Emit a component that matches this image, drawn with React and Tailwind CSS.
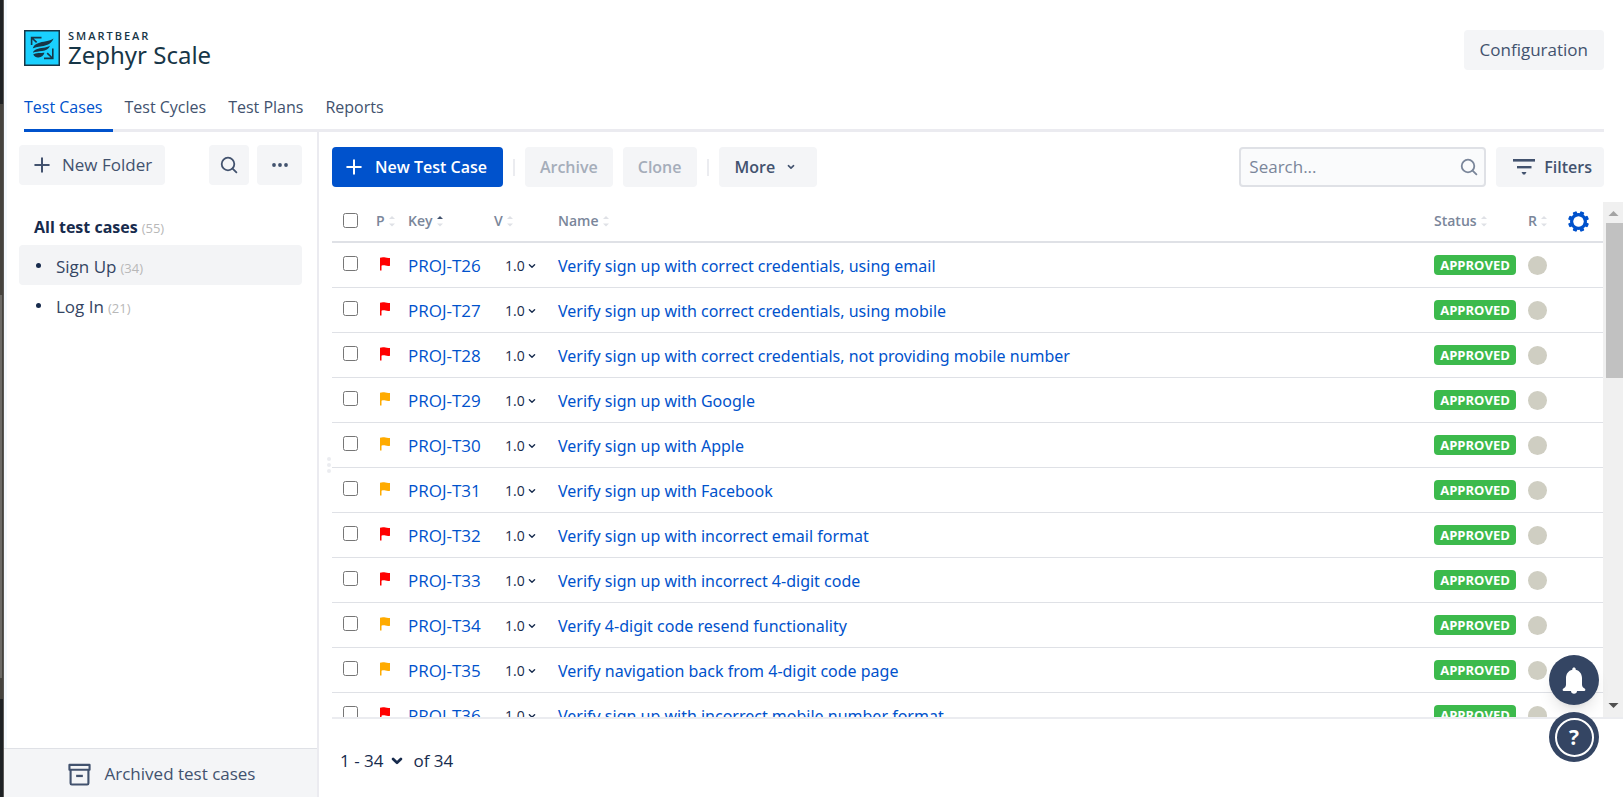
import React from "react";

const RED = "#ff0000";
const AMBER = "#ffab00";

const testCases = [
  { key: "PROJ-T26", name: "Verify sign up with correct credentials, using email", flag: RED },
  { key: "PROJ-T27", name: "Verify sign up with correct credentials, using mobile", flag: RED },
  { key: "PROJ-T28", name: "Verify sign up with correct credentials, not providing mobile number", flag: RED },
  { key: "PROJ-T29", name: "Verify sign up with Google", flag: AMBER },
  { key: "PROJ-T30", name: "Verify sign up with Apple", flag: AMBER },
  { key: "PROJ-T31", name: "Verify sign up with Facebook", flag: AMBER },
  { key: "PROJ-T32", name: "Verify sign up with incorrect email format", flag: RED },
  { key: "PROJ-T33", name: "Verify sign up with incorrect 4-digit code", flag: RED },
  { key: "PROJ-T34", name: "Verify 4-digit code resend functionality", flag: AMBER },
  { key: "PROJ-T35", name: "Verify navigation back from 4-digit code page", flag: AMBER },
  { key: "PROJ-T36", name: "Verify sign up with incorrect mobile number format", flag: RED },
];

function Logo() {
  return (
    <svg width="36" height="36" viewBox="0 0 36 36" aria-hidden="true">
      <rect x="0.75" y="0.75" width="34.5" height="34.5" fill="#1ad0ff" stroke="#173647" strokeWidth="1.5" />
      <g fill="#173647">
        <path d="M29.500 8.500C25.500 11.800 19 11 13.500 13.400C10.500 14.700 9 16.600 8.800 18.600C13.500 15.400 26 18 29.500 8.500Z" />
        <path d="M26 15.800C22 18.200 16.500 17.600 12.500 19.200C10.200 20.200 9 21.400 9 22.800C13.500 20.400 23.500 22.800 26 15.800Z" />
        <path d="M20.500 22.800C17.500 23.200 11.500 22.600 9.200 24.600C10.400 26.700 12.500 27.800 14.600 27.500C17.600 27.100 19.800 25.300 20.500 22.800Z" />
      </g>
      <g fill="none" stroke="#173647" strokeWidth="1.6">
        <path d="M7.600 15V7.600H17.500M8 8l4.600 4.400" />
        <path d="M28.800 18.500V28.400H20M28.200 28l-5-4.800" />
      </g>
    </svg>
  );
}

function Plus() {
  return (
    <svg width="16" height="16" viewBox="0 0 16 16" fill="none" stroke="currentColor" strokeWidth="2" strokeLinecap="round" aria-hidden="true">
      <path d="M8 1.200v13.600M1.200 8h13.600" />
    </svg>
  );
}

function Magnifier() {
  return (
    <svg width="18" height="18" viewBox="0 0 18 18" fill="none" stroke="currentColor" strokeWidth="1.8" strokeLinecap="round" aria-hidden="true">
      <circle cx="8" cy="8" r="6.300" />
      <path d="M12.600 12.600L16.400 16.400" />
    </svg>
  );
}

function Chevron({ size = 8, weight = 2 }) {
  return (
    <svg width={size} height={size} viewBox="0 0 8 8" fill="none" stroke="currentColor" strokeWidth={weight} strokeLinecap="round" strokeLinejoin="round" aria-hidden="true">
      <path d="M1.400 2.700L4 5.200L6.600 2.700" />
    </svg>
  );
}

function Sort({ active }) {
  return (
    <svg width="6" height="12" viewBox="0 0 6 12" aria-hidden="true">
      <path d="M0 4L3 1L6 4Z" fill={active ? "#42526e" : "#dfe1e6"} />
      <path d="M0 8.500L3 11.500L6 8.500Z" fill="#dfe1e6" />
    </svg>
  );
}

function Flag({ color }) {
  return (
    <svg width="10" height="14" viewBox="0 0 10 14" className="block" aria-hidden="true">
      <path d="M0 0.800C1.800 0 3.800 0 5.500 0.600C7 1.100 8.500 1.300 10 0.900V8.800C8.500 9.300 7 9.100 5.500 8.600C4.200 8.200 2.700 8.200 1.500 8.800V13.500H0Z" fill={color} />
    </svg>
  );
}

function Gear() {
  return (
    <svg width="21" height="21" viewBox="0 0 21 21" aria-hidden="true">
      <g fill="#0052cc">
        {[22.5, 67.5, 112.5, 157.5, 202.5, 247.5, 292.5, 337.5].map((a) => (
          <rect key={a} x="8.400" y="0" width="4.200" height="5" rx="1" transform={`rotate(${a} 10.5 10.5)`} />
        ))}
      </g>
      <circle cx="10.5" cy="10.5" r="6.900" fill="none" stroke="#0052cc" strokeWidth="3.200" />
    </svg>
  );
}

function FilterIcon() {
  return (
    <svg width="22" height="16" viewBox="0 0 22 16" fill="currentColor" aria-hidden="true">
      <path d="M0 0H22V2.600H0Z" />
      <path d="M4 7H18.500V9.400H4Z" />
      <path d="M8.500 13H13.500L12 15.400H10Z" />
    </svg>
  );
}

function ArchiveIcon() {
  return (
    <svg width="23" height="23" viewBox="0 0 24 24" fill="none" stroke="currentColor" strokeWidth="2.200" strokeLinejoin="round" aria-hidden="true">
      <rect x="1.500" y="2" width="21" height="5" />
      <path d="M2.700 7V21.200Q2.700 22.500 4 22.500H20Q21.300 22.500 21.300 21.200V7" />
      <path d="M8.500 13.500H15.500" strokeWidth="2.400" />
    </svg>
  );
}

function Divider() {
  return <span className="h-[17px] w-0.5 bg-[#ebecf0]" />;
}

function WindowEdge() {
  return (
    <div className="flex w-1 shrink-0 flex-col border-r border-[#5a5856] bg-[#1e2124]" aria-hidden="true">
      <div className="h-[104px] bg-[#1e2124]" />
      <div className="flex flex-col bg-[#45433e] pt-[191px] pb-[21px]">
        <div className="h-[383px] w-0.5 bg-[#6c6a66]" />
      </div>
    </div>
  );
}

function Header() {
  const tab = "pb-2.5 text-[#42526e]";
  return (
    <header className="pl-[17px] pr-[19px]">
      <div className="flex h-[90px] items-start justify-between pt-[30px]">
        <div className="flex gap-2 text-[#173647]">
          <Logo />
          <div className="flex flex-col">
            <span className="text-[11px] leading-3 font-semibold tracking-[2px]">SMARTBEAR</span>
            <span className="font-['Noto_Sans'] text-2xl leading-[26px]">Zephyr Scale</span>
          </div>
        </div>
        <button className="h-10 rounded bg-[#f4f5f7] px-4 font-medium text-[#42526e]">Configuration</button>
      </div>
      <nav className="flex gap-[22px] border-b-[3px] border-[#ebebf0] pt-[5px] text-base leading-6 font-medium">
        <a href="#cases" className="-mr-[11px] -mb-[3px] border-b-[3px] border-[#0052cc] pr-[11px] text-[#0052cc]">Test Cases</a>
        <a href="#cycles" className={tab}>Test Cycles</a>
        <a href="#plans" className={tab}>Test Plans</a>
        <a href="#reports" className={tab}>Reports</a>
      </nav>
    </header>
  );
}

function Folder({ name, count, selected }) {
  return (
    <li className={selected ? "flex h-10 items-center rounded bg-[#f3f4f6] pl-[17px]" : "flex h-10 items-center pl-[17px]"}>
      <span className="mr-[15px] size-[5px] rounded-full bg-[#172b4d]" />
      <span className="flex items-baseline gap-1 pt-1">
        <a href={`#${name}`}>{name}</a>
        <span className="text-[13px] text-[#b8b8b8]">({count})</span>
      </span>
    </li>
  );
}

function Sidebar() {
  return (
    <aside className="flex w-[312px] shrink-0 flex-col border-r-2 border-[#ebebf0]">
      <div className="flex flex-1 flex-col pl-3 pr-[15px] pt-[13px]">
        <div className="flex gap-2 font-medium text-[#42526e]">
          <button className="flex h-10 items-center gap-3 rounded bg-[#f4f5f7] pl-[15px] pr-[13px]">
            <Plus /> New Folder
          </button>
          <button aria-label="Search folders" className="ml-auto flex size-10 items-center justify-center rounded bg-[#f4f5f7]">
            <Magnifier />
          </button>
          <button aria-label="More folder actions" className="flex h-10 w-[45px] items-center justify-center rounded bg-[#f4f5f7]">
            <svg width="16" height="4" viewBox="0 0 16 4" fill="currentColor" aria-hidden="true">
              <circle cx="2" cy="2" r="1.9" />
              <circle cx="8" cy="2" r="1.9" />
              <circle cx="14" cy="2" r="1.9" />
            </svg>
          </button>
        </div>
        <div className="mt-6 flex h-9 items-baseline gap-1 pl-[15px] pt-1.5 text-[#172b4d]">
          <span className="text-base font-bold">All test cases</span>
          <span className="text-[13px] text-[#b8b8b8]">(55)</span>
        </div>
        <ul className="text-[#344563]">
          <Folder name="Sign Up" count={34} selected />
          <Folder name="Log In" count={21} />
        </ul>
      </div>
      <button className="-ml-[3px] flex h-[49px] items-center justify-center gap-3.5 border-t border-[#dfe1e6] bg-[#f4f5f7] pt-0.5 pl-0.5 font-medium text-[#42526e]">
        <ArchiveIcon /> Archived test cases
      </button>
    </aside>
  );
}

function Toolbar() {
  return (
    <div className="mr-[19px] flex items-center gap-2.5 text-base font-semibold text-[#42526e]">
      <button className="flex h-10 items-center gap-[13px] rounded bg-[#0052cc] pl-3.5 pr-4 text-white">
        <Plus /> New Test Case
      </button>
      <Divider />
      <button disabled className="h-10 rounded bg-[#f4f5f7] px-[15px] text-[#a5adba]">Archive</button>
      <button disabled className="h-10 rounded bg-[#f4f5f7] px-[15px] text-[#a5adba]">Clone</button>
      <Divider />
      <button className="flex h-10 items-center gap-3 rounded bg-[#f4f5f7] pl-4 pr-[22px]">
        More <Chevron size={8} weight={1.6} />
      </button>
      <label className="ml-auto flex h-10 w-[247px] items-center rounded border-2 border-[#dfe1e6] bg-[#fafbfc] pl-2 pr-1.5 text-[17px] font-normal text-[#7a869a]">
        <input aria-label="Search" placeholder="Search..." className="min-w-0 flex-1 bg-transparent outline-none placeholder:text-[#7a869a]" />
        <Magnifier />
      </label>
      <button className="flex h-10 items-center gap-[9px] rounded bg-[#f4f5f7] pl-[17px] pr-3">
        <FilterIcon /> Filters
      </button>
    </div>
  );
}

function HeadCell({ label, active }) {
  return (
    <th className="p-0 pb-0.5 text-left font-semibold">
      <span className="flex items-center gap-1">
        {label} <Sort active={active} />
      </span>
    </th>
  );
}

function CasesTable() {
  const box = "mb-[3px] ml-[11px] block size-[15px]";
  return (
    <table className="w-full table-fixed border-separate border-spacing-0">
      <colgroup>
        <col className="w-11" />
        <col className="w-8" />
        <col className="w-[86px]" />
        <col className="w-16" />
        <col />
        <col className="w-[94px]" />
        <col className="w-10" />
        <col className="w-[35px]" />
      </colgroup>
      <thead>
        <tr className="h-[41px] text-sm text-[#7a869a] [&>th]:border-b-2 [&>th]:border-[#dfe1e6]">
          <th className="p-0">
            <input type="checkbox" aria-label="Select all" className={box} />
          </th>
          <HeadCell label="P" />
          <HeadCell label="Key" active />
          <HeadCell label="V" />
          <HeadCell label="Name" />
          <HeadCell label="Status" />
          <HeadCell label="R" />
          <th className="p-0">
            <button aria-label="Column settings" className="block">
              <Gear />
            </button>
          </th>
        </tr>
      </thead>
      <tbody>
        {testCases.map((c) => (
          <tr key={c.key} className="h-[45px] [&>td]:border-b [&>td]:border-[#dfe1e6]">
            <td className="p-0">
              <input type="checkbox" aria-label={`Select ${c.key}`} className={box} />
            </td>
            <td className="p-0">
              <span className="block pb-[3px] pl-1">
                <Flag color={c.flag} />
              </span>
            </td>
            <td className="p-0 pt-0.5 whitespace-nowrap">
              <a href={`#${c.key}`} className="text-[#0052cc]">{c.key}</a>
            </td>
            <td className="p-0 pt-0.5">
              <button className="flex items-center gap-[3px] pl-[11px] text-sm text-[#172b4d]">
                1.0 <Chevron size={8} weight={1.4} />
              </button>
            </td>
            <td className="p-0 pt-0.5 font-['Noto_Sans'] text-base">
              <a href={`#${c.key}`} className="text-[#0052cc]">{c.name}</a>
            </td>
            <td className="p-0">
              <span className="flex h-5 w-[82px] items-center justify-center rounded bg-[#3cba4c] pt-px text-[13px] font-bold text-white">APPROVED</span>
            </td>
            <td className="p-0">
              <span className="block size-[19px] rounded-full bg-[#cfcec2]" />
            </td>
            <td className="p-0" />
          </tr>
        ))}
      </tbody>
    </table>
  );
}

function Scrollbar() {
  return (
    <div className="flex w-5 shrink-0 flex-col items-center justify-between bg-[#f0f0f0]" aria-hidden="true">
      <div className="flex flex-col items-center">
        <svg width="20" height="21" viewBox="0 0 20 21">
          <path d="M5.500 14L10.500 9L15.500 14Z" fill="#a3a3a3" />
        </svg>
        <div className="ml-0.5 h-[155px] w-[17px] bg-[#c1c1c1]" />
      </div>
      <svg width="20" height="20" viewBox="0 0 20 20">
        <path d="M5.500 6L10.500 11L15.500 6Z" fill="#505050" />
      </svg>
    </div>
  );
}

function FloatingActions() {
  const fab = "flex size-[50px] items-center justify-center rounded-full bg-[#344563] text-white";
  return (
    <div className="fixed right-6 bottom-[35px] flex flex-col gap-[7px]">
      <button aria-label="Notifications" className={`${fab} shadow-lg`}>
        <svg width="24" height="27" viewBox="0 0 24 27" fill="currentColor" aria-hidden="true">
          <path d="M12 0.500C13 0.500 13.700 1.200 13.700 2.200V2.700C17.600 3.600 20 6.900 20 11V17.500C20 19.500 21 20.700 22.600 21.600C23.800 22.300 23.600 24 22.200 24H1.800C0.400 24 0.200 22.300 1.400 21.600C3 20.700 4 19.500 4 17.500V11C4 6.900 6.400 3.600 10.300 2.700V2.200C10.300 1.200 11 0.500 12 0.500Z" />
          <path d="M9 24H15C15 25.700 13.700 26.800 12 26.800C10.300 26.800 9 25.700 9 24Z" />
        </svg>
      </button>
      <button aria-label="Help" className={fab}>
        <span className="flex size-[39px] items-center justify-center rounded-full border-2 border-white text-[21px] leading-none font-bold">?</span>
      </button>
    </div>
  );
}

export default function App() {
  return (
    <div className="flex h-screen overflow-hidden bg-white font-['Open_Sans','Noto_Sans',sans-serif] text-[17px] text-[#172b4d]">
      <WindowEdge />
      <div className="flex min-w-0 flex-1 flex-col border-l-[3px] border-[#f4f9fe]">
        <Header />
        <div className="flex min-h-0 flex-1">
          <Sidebar />
          <main className="flex min-w-0 flex-1 flex-col pt-[15px]">
            <div className="pl-[13px]">
              <Toolbar />
            </div>
            <div className="mt-[15px] flex min-h-0 flex-1">
              <div className="flex w-[13px] shrink-0 flex-col items-end gap-0.5 pr-px pt-[255px]" aria-hidden="true">
                <span className="size-1 rounded-full bg-[#ebecf0]" />
                <span className="size-1 rounded-full bg-[#ebecf0]" />
                <span className="size-1 rounded-full bg-[#ebecf0]" />
              </div>
              <div className="flex min-w-0 flex-1 border-b-2 border-[#ebecf0]">
                <div className="min-w-0 flex-1 overflow-hidden">
                  <CasesTable />
                </div>
                <Scrollbar />
              </div>
            </div>
            <footer className="flex h-[78px] items-center gap-2.5 pl-[21px] pt-1.5">
              <button className="flex items-center gap-2">
                1 - 34 <Chevron size={12} weight={1.8} />
              </button>
              <span>of 34</span>
            </footer>
          </main>
        </div>
      </div>
      <FloatingActions />
    </div>
  );
}
